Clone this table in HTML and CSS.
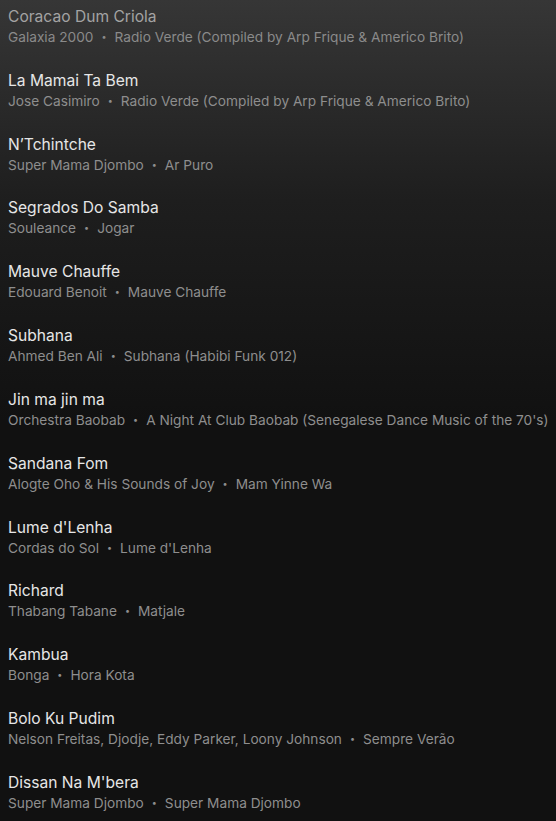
FILE: index.html
```html
<!DOCTYPE html>
<html lang="en">
<head>
    <meta charset="UTF-8">
    <meta name="viewport" content="width=device-width, initial-scale=1.0">
    <title>Tracks</title>
    <link rel="stylesheet" href="styles.css">
</head>
<body>
    <ul class="tracks">
        <li class="track faded">
            <div class="title">Coracao Dum Criola</div>
            <div class="sub">Galaxia 2000<span class="dot">•</span>Radio Verde (Compiled by Arp Frique &amp; Americo Brito)</div>
        </li>
        <li class="track">
            <div class="title">La Mamai Ta Bem</div>
            <div class="sub">Jose Casimiro<span class="dot">•</span>Radio Verde (Compiled by Arp Frique &amp; Americo Brito)</div>
        </li>
        <li class="track">
            <div class="title">N’Tchintche</div>
            <div class="sub">Super Mama Djombo<span class="dot">•</span>Ar Puro</div>
        </li>
        <li class="track">
            <div class="title">Segrados Do Samba</div>
            <div class="sub">Souleance<span class="dot">•</span>Jogar</div>
        </li>
        <li class="track">
            <div class="title">Mauve Chauffe</div>
            <div class="sub">Edouard Benoit<span class="dot">•</span>Mauve Chauffe</div>
        </li>
        <li class="track">
            <div class="title">Subhana</div>
            <div class="sub">Ahmed Ben Ali<span class="dot">•</span>Subhana (Habibi Funk 012)</div>
        </li>
        <li class="track">
            <div class="title">Jin ma jin ma</div>
            <div class="sub">Orchestra Baobab<span class="dot">•</span>A Night At Club Baobab (Senegalese Dance Music of the 70's)</div>
        </li>
        <li class="track">
            <div class="title">Sandana Fom</div>
            <div class="sub">Alogte Oho &amp; His Sounds of Joy<span class="dot">•</span>Mam Yinne Wa</div>
        </li>
        <li class="track">
            <div class="title">Lume d'Lenha</div>
            <div class="sub">Cordas do Sol<span class="dot">•</span>Lume d'Lenha</div>
        </li>
        <li class="track">
            <div class="title">Richard</div>
            <div class="sub">Thabang Tabane<span class="dot">•</span>Matjale</div>
        </li>
        <li class="track">
            <div class="title">Kambua</div>
            <div class="sub">Bonga<span class="dot">•</span>Hora Kota</div>
        </li>
        <li class="track">
            <div class="title">Bolo Ku Pudim</div>
            <div class="sub">Nelson Freitas, Djodje, Eddy Parker, Loony Johnson<span class="dot">•</span>Sempre Verão</div>
        </li>
        <li class="track">
            <div class="title">Dissan Na M'bera</div>
            <div class="sub">Super Mama Djombo<span class="dot">•</span>Super Mama Djombo</div>
        </li>
    </ul>
</body>
</html>
```

FILE: styles.css
```css
html {
    background: #121212;
}
body {
    margin: 0;
    height: 821px;
    overflow: hidden;
    font-family: Inter, "Noto Sans", sans-serif;
    background: linear-gradient(to bottom, #363636 0px, #1e1e1e 200px, #111111 420px, #111111 100%);
}
.tracks {
    list-style: none;
    margin: 0;
    padding: 0;
}
.track {
    height: 63.83px;
    box-sizing: border-box;
    padding: 6px 8px 0;
    white-space: nowrap;
}
.title {
    font-size: 15.6px;
    line-height: 22px;
    height: 21px;
    color: #e6e6e6;
}
.sub {
    font-size: 13.7px;
    line-height: 20px;
    height: 20px;
    color: #8e8e8e;
}
.dot {
    display: inline-block;
    font-size: 9px;
    line-height: 0;
    margin: 0 8px;
    vertical-align: 2px;
}
.faded .title {
    color: #a3a3a3;
}
.faded .sub {
    color: #8a8a8a;
}
```
